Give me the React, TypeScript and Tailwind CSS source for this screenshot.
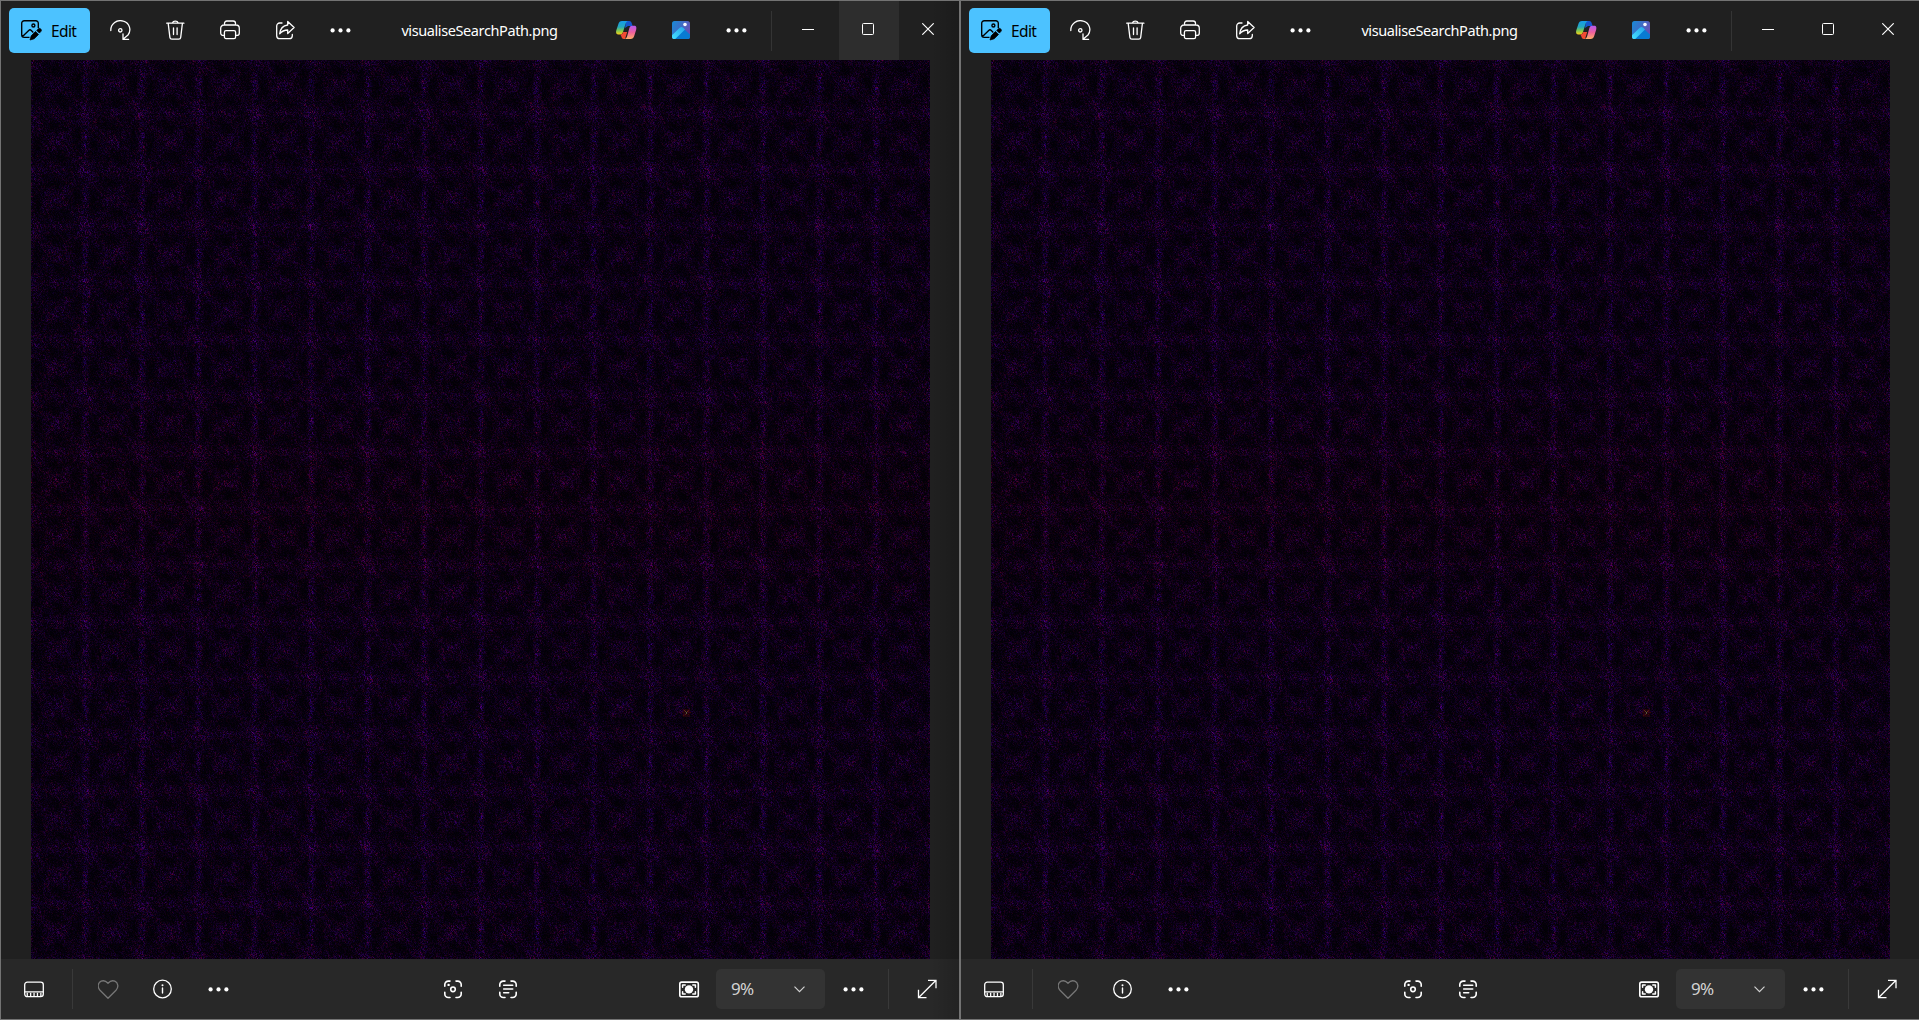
import React, { useLayoutEffect, useRef } from "react";

const SIZE = 899;
const PERIOD = 56.47;

function hash(a: number, b: number) {
  let h = Math.imul(a | 0, 374761393) + Math.imul(b | 0, 668265263);
  h = Math.imul(h ^ (h >>> 13), 1274126177);
  h = Math.imul(h ^ (h >>> 16), 2246822519);
  return ((h ^ (h >>> 15)) >>> 0) / 4294967296;
}

const wrap = (t: number) => t - Math.round(t);
const bump = (d: number, s: number) => Math.exp(-(d * d) / (2 * s * s));

/* Lattice of visited cells: vertical and horizontal ridges, diagonals and slanted streaks. */
function SearchPath() {
  const ref = useRef<HTMLCanvasElement>(null);
  useLayoutEffect(() => {
    const ctx = ref.current?.getContext("2d");
    if (!ctx) return;
    const img = ctx.createImageData(SIZE, SIZE);
    for (let y = 0; y < SIZE; y++) {
      for (let x = 0; x < SIZE; x++) {
        const u = wrap((x - 54) / PERIOD);
        const v = wrap((y - 53) / PERIOD);
        const mid = bump(Math.abs(v) - 0.5, 0.17);
        const midU = bump(Math.abs(u) - 0.5, 0.22);
        const vert = bump(u, 0.04) * (0.08 + 0.72 * mid);
        const horz = bump(v, 0.05) * (0.05 + 0.42 * midU);
        const d1 = bump(wrap(u - v), 0.1);
        const d2 = bump(wrap(u + v), 0.1);
        const steep = bump(wrap(u - v * 0.5), 0.08) + bump(wrap(u - v * 0.5 - 0.5), 0.08);
        const hole = bump(Math.abs(u) - 0.17, 0.08) * mid + bump(Math.abs(v) - 0.24, 0.08) * midU;
        let base = 0.31 + 0.17 * d1 + 0.14 * d2 + 0.13 * steep - 0.2 * hole;
        base += vert * 0.75 + horz * 0.36;
        const n = hash(x, y);
        const streak = hash(Math.floor(x - y * 0.57), Math.floor((y + (x * 7)) / 19));
        const level = Math.max(0.03, base) * (0.15 + 1.0 * n * n + 0.7 * n) * (0.72 + 0.75 * streak * streak);
        const tint = hash(x + 3001, y + 77);
        const redZone = bump((y - 445) / SIZE, 0.07);
        const red = 0.36 + 0.48 * tint * tint + 0.1 * redZone + 0.15 * streak - 0.15 * vert;
        const blue = 1.08 - 0.62 * tint * tint - 0.14 * redZone;
        const i = (y * SIZE + x) * 4;
        const l = level * 65;
        img.data[i] = Math.min(100, l * red);
        img.data[i + 1] = 0;
        img.data[i + 2] = Math.min(130, 3 + l * blue);
        img.data[i + 3] = 255;
      }
    }
    const mark: [number, number, string][] = [
      [653, 650, "#5a2811"], [654, 651, "#55402a"], [655, 652, "#626044"], [655, 653, "#4f5538"],
      [656, 651, "#653015"], [657, 650, "#501410"], [654, 654, "#552010"], [652, 655, "#490b09"],
      [657, 654, "#430809"], [651, 652, "#380606"], [659, 652, "#360505"],
    ];
    ctx.putImageData(img, 0, 0);
    ctx.fillStyle = "rgba(80,5,0,0.35)";
    ctx.fillRect(652, 649, 7, 8);
    mark.forEach(([x, y, c]) => {
      ctx.fillStyle = c;
      ctx.fillRect(x, y, 1, 1);
    });
  }, []);
  return <canvas ref={ref} width={SIZE} height={SIZE} className="block h-[899px] w-[899px] bg-[#0b0012]" />;
}

function Slot({ children, className = "text-white" }: { children: React.ReactNode; className?: string }) {
  return (
    <button className={`flex h-full w-[55px] shrink-0 items-center pl-[17px] ${className}`}>
      <svg
        width="21"
        height="21"
        viewBox="0 0 21 21"
        fill="none"
        stroke="currentColor"
        strokeWidth="1.3"
        strokeLinecap="round"
        strokeLinejoin="round"
        className="shrink-0"
      >
        {children}
      </svg>
    </button>
  );
}

const Dots = () => (
  <g fill="currentColor" stroke="none">
    <circle cx="2.6" cy="10.4" r="2.1" />
    <circle cx="10.5" cy="10.4" r="2.1" />
    <circle cx="18.4" cy="10.4" r="2.1" />
  </g>
);

const Frame = () => <path d="M.8 6V4.3A3.5 3.5 0 0 1 4.3.8H6M12 .8h1.7a3.5 3.5 0 0 1 3.5 3.5V6M17.2 12v1.7a3.5 3.5 0 0 1-3.5 3.5H12M6 17.2H4.3a3.5 3.5 0 0 1-3.5-3.5V12" />;

function Toolbar({ id, hover }: { id: string; hover: boolean }) {
  return (
    <header className="flex h-[59px] shrink-0 items-center">
      <button className="ml-2 flex h-[45px] w-[81px] shrink-0 items-center rounded-[5px] bg-[#4cc2ff] pl-3 text-black">
        <svg width="21" height="21" viewBox="0 0 21 21" fill="none" stroke="currentColor" strokeWidth="1.35" strokeLinejoin="round" className="shrink-0">
          <path d="M8.5 17.3H3.2A2.5 2.5 0 0 1 .7 14.8V3.2A2.5 2.5 0 0 1 3.2.7h11.6a2.5 2.5 0 0 1 2.5 2.5v5M1.5 16.5l6.2-6.1q1.3-1.2 2.6 0l2 2" />
          <circle cx="12.4" cy="5.5" r="1.5" />
          <path d="m9 20 1.2-4.2 4.3-4.3 3 3-4.3 4.3zM15.7 10.4l1.5-1.4a1.6 1.6 0 0 1 2.6 2.6l-1.4 1.5z" fill="currentColor" strokeWidth=".7" />
        </svg>
        <span className="ml-[9px] text-[15.5px] leading-5 tracking-[-0.6px]">Edit</span>
      </button>
      <div className="ml-[3px] flex h-full">
        <Slot>
          <path d="M.8 10.5A9.5 9.5 0 0 1 13.4 1.2C19.8 3.2 21.6 10.4 18 15l-5 4.2M13 13.8v5.6h5.6" />
          <circle cx="10.3" cy="10.3" r="1.7" />
        </Slot>
        <Slot>
          <path d="M1.7 3.2h17.2M7.4 3a3 2.4 0 0 1 5.8 0M3.2 3.4l1.7 14a2 2 0 0 0 2 1.8h6.8a2 2 0 0 0 2-1.8l1.7-14M8.5 7.8v6.7M12.1 7.8v6.7" />
        </Slot>
        <Slot>
          <path d="M4.5 5V3.3A2.3 2.3 0 0 1 6.8 1h6.4a2.3 2.3 0 0 1 2.3 2.3V5M4.3 15.4H3.2A2.5 2.5 0 0 1 .7 12.9V8.2a3.2 3.2 0 0 1 3.2-3.2h12.2a3.2 3.2 0 0 1 3.2 3.2v4.7a2.5 2.5 0 0 1-2.5 2.5h-1.1" />
          <rect x="4.4" y="10.6" width="11.2" height="8" rx="1.6" />
        </Slot>
        <Slot>
          <path d="M7 3H4.7a3 3 0 0 0-3 3v9.7a3 3 0 0 0 3 3h9.6a3 3 0 0 0 3-3v-1.2" />
          <path d="M12.7 5V1.5l6.4 6-6.4 6V10c-3.3 0-5.6.8-8 3.8.5-4.8 3.3-8.2 8-8.8z" />
        </Slot>
        <Slot><Dots /></Slot>
      </div>
      <div className="flex flex-1 justify-center pb-0.5 pr-2 text-[14.5px] leading-5 tracking-[-0.4px] text-white">
        <span>visualiseSearchPath.png</span>
      </div>
      <Slot>
        <defs>
          <linearGradient id={`${id}a`} x1="0" y1="0" x2="0" y2="1">
            <stop offset="0" stopColor="#159bea" /><stop offset=".45" stopColor="#26a8bd" /><stop offset=".7" stopColor="#79c757" /><stop offset="1" stopColor="#f5cf16" />
          </linearGradient>
          <linearGradient id={`${id}b`} x1="0" y1="0" x2="0" y2="1">
            <stop offset="0" stopColor="#b65af0" /><stop offset=".5" stopColor="#ee609c" /><stop offset="1" stopColor="#ffad68" />
          </linearGradient>
        </defs>
        <g stroke="none">
          <path d="M10 1h3c2 0 2.4 1.2 3 3l.6 2H12L9 8z" fill="#1555ce" />
          <path d="M6 1h6.5C10.5 1 10 2.5 9.5 4L7 12c-.5 1.6-1.2 2.4-3 2.4H2.3C0 14.4-.3 12.4.4 10l2-6C3 2.1 4 1 6 1z" fill={`url(#${id}a)`} />
          <path d="M4.2 14.4c2 0 2.6-.8 3-2.3h4L9 19H8c-2 0-2.4-1.6-2.8-3.1z" fill="#f24b32" />
          <path d="M14.5 19H8.2c2 0 2.5-1.5 3-3L13.4 8c.5-1.5 1.3-2.2 3-2.2h1.8c2.3 0 2.5 2 1.9 4.2l-1.9 6c-.6 1.9-1.7 3-3.7 3z" fill={`url(#${id}b)`} />
        </g>
      </Slot>
      <Slot>
        <defs>
          <linearGradient id={`${id}c`} x1="0" y1="0" x2="1" y2=".5">
            <stop offset="0" stopColor="#168bd7" /><stop offset="1" stopColor="#6650b6" />
          </linearGradient>
          <linearGradient id={`${id}d`} x1="1" y1="0" x2="0" y2="1">
            <stop offset="0" stopColor="#27a5eb" /><stop offset="1" stopColor="#45dfff" />
          </linearGradient>
          <clipPath id={`${id}e`}><rect x="1" y="1" width="18" height="18" rx="2.6" /></clipPath>
        </defs>
        <g stroke="none" clipPath={`url(#${id}e)`}>
          <rect x="1" y="1" width="18" height="18" fill={`url(#${id}c)`} />
          <path d="m9.2 7.7 1.5-.6 9.3 8.3V20H4z" fill="#087bd2" />
          <path d="M1 15.2 9 7.6q1.6-1.2 3 0l2 1.9L4.2 19H1z" fill={`url(#${id}d)`} />
          <circle cx="14" cy="4.5" r="1.8" fill="#f5f8ff" />
        </g>
      </Slot>
      <Slot><Dots /></Slot>
      <div className="ml-[7px] h-10 w-px bg-[#343434]" />
      <div className="ml-[7px] flex h-full shrink-0">
        <button className="flex w-[60px] items-center justify-center pb-0.5 pr-0.5">
          <span className="h-px w-3 bg-white" />
        </button>
        <button className={`flex w-[60px] items-center justify-center pb-[3px] pr-0.5 ${hover ? "bg-[#2d2d2d]" : ""}`}>
          <span className="h-3 w-3 rounded-[1.5px] border border-white" />
        </button>
        <button className="flex w-[60px] items-center justify-center pb-[3px] pr-0.5">
          <svg width="12" height="12" viewBox="0 0 12 12" stroke="white" strokeWidth="1.15"><path d="m.3.3 11.4 11.4M11.7.3.3 11.7" /></svg>
        </button>
      </div>
    </header>
  );
}

function StatusBar() {
  return (
    <footer className="flex h-[60px] shrink-0 items-center bg-[#282828]">
      <div className="ml-1.5 flex h-full">
        <Slot>
          <rect x=".7" y="3.1" width="18.6" height="14.6" rx="2.6" />
          <path d="M1 12.9h18" />
          <path d="M2.6 15.6h15.5" strokeWidth="3.6" strokeLinecap="butt" strokeDasharray="1.3 2.1" />
        </Slot>
      </div>
      <div className="ml-2.5 h-10 w-px bg-[#393939]" />
      <div className="ml-2 flex h-full">
        <Slot className="text-[#777]">
          <path d="M10 19.3 2 11.2C-1 8-.1 3.7 3.2 2.2 5.9 1 8 2.1 10 4.2c2-2.1 4.1-3.2 6.8-2 3.3 1.5 4.2 5.8 1.2 9z" />
        </Slot>
        <Slot>
          <circle cx="9.5" cy="10" r="8.8" />
          <path d="M9.5 9v5" strokeWidth="1.4" />
          <circle cx="9.5" cy="6.3" r="1" fill="currentColor" stroke="none" />
        </Slot>
        <Slot><Dots /></Slot>
      </div>
      <div className="ml-[181px] flex h-full">
        <Slot>
          <g transform="translate(0 1.3)" strokeWidth="1.6">
            <Frame />
            <circle cx="9" cy="9" r="2.3" />
            <circle cx="4.6" cy="4.6" r="1.2" fill="currentColor" stroke="none" />
          </g>
        </Slot>
        <Slot>
          <g transform="translate(0 1.3)" strokeWidth="1.6">
            <Frame />
            <path d="M4.7 5h9M4.7 8.7h9M4.7 12.4h5" />
          </g>
        </Slot>
      </div>
      <div className="ml-[125px] flex h-full w-[54px]">
        <Slot>
          <rect x=".8" y="3.1" width="18.5" height="14.6" rx="1.8" strokeWidth="1.6" />
          <circle cx="10" cy="10.4" r="4.2" fill="currentColor" stroke="none" />
          <path d="M3.6 8.2V6h2.6M13.8 6h2.6v2.2M16.4 12.7v2.2h-2.6M6.2 14.9H3.6v-2.2" strokeWidth="1.5" />
        </Slot>
      </div>
      <button className="flex h-10 w-[109px] shrink-0 items-center justify-between rounded-[5px] bg-[#333333] pl-[15px] pr-5 text-[#d2d2d2]">
        <span className="text-[17px] leading-6 tracking-[-0.7px]">9%</span>
        <svg width="11" height="7" viewBox="0 0 11 7" fill="none" stroke="currentColor" strokeWidth="1.2"><path d="m.5.7 5 5 5-5" /></svg>
      </button>
      <div className="ml-px flex h-full">
        <Slot><Dots /></Slot>
      </div>
      <div className="ml-[7px] h-10 w-px bg-[#393939]" />
      <div className="ml-[11px] flex h-full">
        <Slot>
          <path d="M1.5 18.7 19 1.3M11 1.3h8v8M1.5 10.7v8h8" strokeLinecap="butt" strokeLinejoin="miter" />
        </Slot>
      </div>
    </footer>
  );
}

function PhotoWindow({ id, hover = false }: { id: string; hover?: boolean }) {
  return (
    <section className="relative flex h-[1020px] w-[960px] shrink-0 flex-col overflow-hidden border border-[#737373] bg-[#202020]">
      <Toolbar id={id} hover={hover} />
      <main className="h-[899px] shrink-0 pl-[30px]"><SearchPath /></main>
      <StatusBar />
      {hover && <div className="pointer-events-none absolute inset-y-0 right-0 w-7 bg-gradient-to-r from-transparent to-black/15" />}
    </section>
  );
}

export default function App() {
  return (
    <div className="flex h-[1020px] w-[1919px] overflow-hidden bg-[#202020] font-['Noto_Sans',sans-serif]">
      <PhotoWindow id="first" hover />
      <PhotoWindow id="second" />
    </div>
  );
}
